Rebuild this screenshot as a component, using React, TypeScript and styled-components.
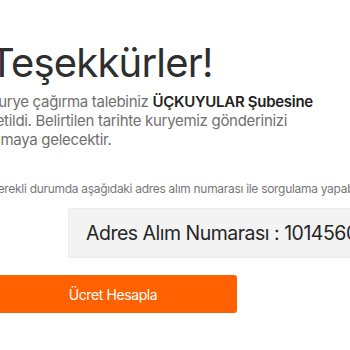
import React from "react";
import styled, { createGlobalStyle } from "styled-components";

const Global = createGlobalStyle`
  html, body { margin: 0; padding: 0; overflow: hidden; background: #fff; }
  body { font-family: Inter, "Noto Sans", sans-serif; }
`;

const Page = styled.main`
  width: 420px;
  margin-left: -11px;
  padding-top: 39px;
  display: flex;
  flex-direction: column;
`;

const Title = styled.h1`
  margin: 0;
  font-size: 40px;
  line-height: 48px;
  font-weight: 400;
  color: #2e2e2e;
  letter-spacing: -0.8px;
`;

const Message = styled.p`
  margin: 5px 0 0;
  font-size: 15px;
  line-height: 19px;
  color: #707070;
  letter-spacing: -0.3px;
  white-space: nowrap;
`;

const Strong = styled.strong`
  font-weight: 600;
  color: #222;
`;

const Hint = styled.p`
  margin: 32px 0 0;
  font-size: 12px;
  line-height: 16px;
  color: #777;
  letter-spacing: -0.3px;
  white-space: nowrap;
`;

const CodeBox = styled.div`
  margin: 11px 0 0 79px;
  height: 50px;
  box-sizing: border-box;
  padding: 0 17px;
  display: flex;
  align-items: center;
  background: #f3f3f3;
  border: 1px solid #ececec;
  border-radius: 2px;
  font-size: 19.5px;
  letter-spacing: -0.5px;
  color: #262626;
  white-space: nowrap;
`;

const Button = styled.button`
  margin-top: 17px;
  width: 248px;
  height: 38px;
  border: none;
  border-radius: 3px;
  background: #ff6000;
  color: #fff;
  font-family: inherit;
  font-size: 14px;
  letter-spacing: -0.4px;
  cursor: pointer;
`;

export default function App() {
  return (
    <>
      <Global />
      <Page>
        <Title>Teşekkürler!</Title>
        <Message>
          Kurye çağırma talebiniz <Strong>ÜÇKUYULAR Şubesine</Strong>
          <br />
          iletildi. Belirtilen tarihte kuryemiz gönderinizi
          <br />
          almaya gelecektir.
        </Message>
        <Hint>
          Gerekli durumda aşağıdaki adres alım numarası ile sorgulama yapabilirsiniz.
        </Hint>
        <CodeBox>Adres Alım Numarası : 1014560</CodeBox>
        <div>
          <Button>Ücret Hesapla</Button>
        </div>
      </Page>
    </>
  );
}
